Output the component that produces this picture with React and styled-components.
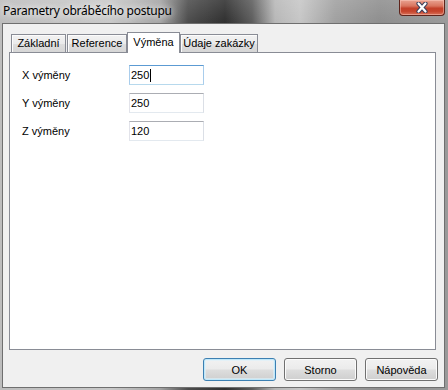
import React from "react";
import styled, { createGlobalStyle } from "styled-components";

const GlobalStyle = createGlobalStyle`
  html, body { margin: 0; padding: 0; width: 448px; height: 390px; overflow: hidden; }
  body { font-family: "Liberation Sans", Arial, sans-serif; font-size: 11px; color: #000; }
  * { box-sizing: border-box; }
`;

const Window = styled.div`
  width: 448px;
  height: 390px;
  display: flex;
  flex-direction: column;
  padding: 0 3px 2px 2px;
  background:
    linear-gradient(180deg, rgba(255,255,255,0.12) 0px, rgba(255,255,255,0) 23px),
    linear-gradient(90deg, #bdbdbd 0px, #c9c9c9 110px, #a4a4a4 160px, #4c4c4c 188px, #2f2f2f 225px, #5c5c5c 252px, #b7b7b7 275px, #c6c6c6 300px, #a0a0a0 335px, #8e8e8e 380px, #9a9a9a 448px);
`;

const TitleBar = styled.div`
  height: 23px;
  display: flex;
  align-items: flex-start;
  padding-left: 1px;
`;

const TitleText = styled.div`
  font-family: "Noto Sans", "Open Sans", sans-serif;
  font-size: 12px;
  line-height: 16px;
  padding-top: 3px;
  letter-spacing: -0.25px;
  color: #000;
  text-shadow: 0 0 6px rgba(255,255,255,0.9), 0 0 10px rgba(255,255,255,0.7);
`;

const CloseButton = styled.div`
  margin-left: auto;
  width: 46px;
  height: 16px;
  display: flex;
  align-items: center;
  justify-content: center;
  border: 1px solid #5e241b;
  border-top: none;
  border-radius: 0 0 4px 4px;
  background: linear-gradient(180deg, #e9a291 0%, #d9755f 40%, #c3412a 55%, #c6442c 75%, #d8725a 100%);
  box-shadow: inset 0 0 0 1px rgba(255,210,200,0.45);
`;

const Client = styled.div`
  flex: 1;
  display: flex;
  flex-direction: column;
  border: 1px solid #6f6f6f;
  background: #f0f0f0;
  padding: 8px 6px 6px 6px;
`;

const TabControl = styled.div`
  flex: 1;
  display: flex;
  flex-direction: column;
  margin-right: 2px;
`;

const TabStrip = styled.div`
  height: 20px;
  display: flex;
  align-items: flex-end;
  padding-left: 2px;
`;

const Tab = styled.div`
  position: relative;
  width: ${(p) => p.$w}px;
  margin-left: ${(p) => p.$ml || 0}px;
  display: flex;
  justify-content: center;
  border: 1px solid #898c95;
  border-bottom: none;
  white-space: nowrap;
  ${(p) =>
    p.$active
      ? `
    height: 21px;
    line-height: 18px;
    margin-bottom: -1px;
    z-index: 1;
    background: #fff;
  `
      : `
    height: 18px;
    line-height: 17px;
    background: linear-gradient(180deg, #f2f2f2 0%, #ebebeb 50%, #dedede 52%, #d6d6d6 100%);
    box-shadow: inset 1px 1px 0 #fcfcfc;
  `}
`;

const Panel = styled.div`
  flex: 1;
  border: 1px solid #898c95;
  background: #fff;
  padding: 12px 0 0 12px;
`;

const Form = styled.div`
  display: grid;
  grid-template-columns: 107px 75px;
  grid-auto-rows: 20px;
  row-gap: 8px;
  align-items: center;
`;

const Label = styled.div`
  line-height: 14px;
`;

const TextBox = styled.div`
  width: 75px;
  height: 20px;
  border: 1px solid;
  border-color: ${(p) =>
    p.$focused ? "#5c9bd3 #a9cdec #b7d9ed #a9cdec" : "#abadb3 #dbdfe6 #e3e9ef #e2e3ea"};
  background: #fff;
  padding: 0 1px;
  line-height: 18px;
  display: flex;
  align-items: center;
`;

const Caret = styled.span`
  display: inline-block;
  width: 1px;
  height: 13px;
  margin-left: 1px;
  background: #000;
`;

const ButtonRow = styled.div`
  display: flex;
  justify-content: flex-end;
  gap: 8px;
  margin-top: 8px;
`;

const Button = styled.div`
  width: 73px;
  height: 23px;
  display: flex;
  align-items: center;
  justify-content: center;
  border: 1px solid ${(p) => (p.$default ? "#3c7fb1" : "#707070")};
  border-radius: 3px;
  background: linear-gradient(180deg, #f2f2f2 0%, #ebebeb 48%, #dddddd 52%, #cfcfcf 100%);
  box-shadow: ${(p) =>
    p.$default ? "inset 0 0 0 1px #c0e8fa, inset 0 0 0 2px rgba(220,242,252,0.6)" : "inset 0 0 0 1px #fbfbfb"};
  line-height: 14px;
`;

const tabs = [
  { label: "Základní", w: 55 },
  { label: "Reference", w: 60, ml: 1 },
  { label: "Výměna", w: 53, active: true },
  { label: "Údaje zakázky", w: 78 },
];

const fields = [
  { label: "X výměny", value: "250", focused: true },
  { label: "Y výměny", value: "250" },
  { label: "Z výměny", value: "120" },
];

export default function App() {
  return (
    <>
      <GlobalStyle />
      <Window>
        <TitleBar>
          <TitleText>Parametry obráběcího postupu</TitleText>
          <CloseButton>
            <svg width="14" height="11" viewBox="0 0 14 11">
              <path d="M3.5 1.5 L10.5 9.5 M10.5 1.5 L3.5 9.5" stroke="#3b3f5a" strokeWidth="4.2" strokeLinecap="round" />
              <path d="M3.5 1.5 L10.5 9.5 M10.5 1.5 L3.5 9.5" stroke="#ffffff" strokeWidth="2.2" strokeLinecap="round" />
            </svg>
          </CloseButton>
        </TitleBar>
        <Client>
          <TabControl>
            <TabStrip>
              {tabs.map((t) => (
                <Tab key={t.label} $w={t.w} $ml={t.ml} $active={t.active}>
                  {t.label}
                </Tab>
              ))}
            </TabStrip>
            <Panel>
              <Form>
                {fields.map((f) => (
                  <React.Fragment key={f.label}>
                    <Label>{f.label}</Label>
                    <TextBox $focused={f.focused}>
                      {f.value}
                      {f.focused && <Caret />}
                    </TextBox>
                  </React.Fragment>
                ))}
              </Form>
            </Panel>
          </TabControl>
          <ButtonRow>
            <Button $default>OK</Button>
            <Button>Storno</Button>
            <Button>Nápověda</Button>
          </ButtonRow>
        </Client>
      </Window>
    </>
  );
}
